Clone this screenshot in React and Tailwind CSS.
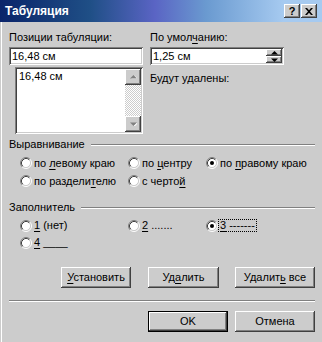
import React from 'react'

const RAISED = 'shadow-[inset_-1px_-1px_0_#404040,inset_1px_1px_0_#ffffff,inset_-2px_-2px_0_#808080]'
const SUNKEN = 'shadow-[inset_1px_1px_0_#808080,inset_-1px_-1px_0_#ffffff,inset_2px_2px_0_#404040,inset_-2px_-2px_0_#cccccc]'

function U({ children }) {
  return <span className="underline underline-offset-2 decoration-1">{children}</span>
}

function Radio({ checked }) {
  return (
    <svg width="12" height="12" viewBox="0 0 12 12" className="shrink-0">
      <circle cx="6" cy="6" r="4.5" fill="#fff" />
      <path d="M2.11 9.89A5.5 5.5 0 0 1 9.89 2.11" fill="none" stroke="#808080" />
      <path d="M9.89 2.11A5.5 5.5 0 0 1 2.11 9.89" fill="none" stroke="#ffffff" />
      <path d="M2.82 9.18A4.5 4.5 0 0 1 9.18 2.82" fill="none" stroke="#404040" />
      <path d="M9.18 2.82A4.5 4.5 0 0 1 2.82 9.18" fill="none" stroke="#cccccc" />
      {checked && <circle cx="6" cy="6" r="2" fill="#000" />}
    </svg>
  )
}

function Option({ checked, focus, children }) {
  return (
    <div className="flex items-center">
      <Radio checked={checked} />
      {focus ? (
        <span className="ml-px px-px leading-[11px] outline outline-1 outline-dotted outline-black">{children}</span>
      ) : (
        <span className="ml-[2px]">{children}</span>
      )}
    </div>
  )
}

function Arrow({ up, disabled }) {
  return (
    <svg width="7" height="4" viewBox="0 0 7 4">
      {disabled && <path d={up ? 'M1 4h7L4.5 0.5z' : 'M1 1h7L4.5 4.5z'} fill="#fff" />}
      <path d={up ? 'M0 3.5h7L3.5 0z' : 'M0 0.5h7L3.5 4z'} fill={disabled ? '#808080' : '#000'} />
    </svg>
  )
}

function Btn({ w, def, children }) {
  return (
    <div className={`${def ? 'border border-black' : ''} h-[21px] ${w}`}>
      <div className={`flex h-full items-center justify-center ${RAISED}`}>
        <span>{children}</span>
      </div>
    </div>
  )
}

function Header({ children }) {
  return (
    <div className="flex h-[13px] items-center">
      <span>{children}</span>
      <div className="ml-[6px] flex-1 border-t border-b border-t-[#808080] border-b-white" />
    </div>
  )
}

export default function App() {
  return (
    <div className="h-[342px] w-[322px] overflow-hidden bg-[#cccccc] font-['Liberation_Sans',Arial,sans-serif] text-[11px] leading-[13px] text-black shadow-[inset_1px_0_0_#cccccc,inset_2px_0_0_#ffffff]">
      {/* title bar */}
      <div className="flex h-[22px] items-center bg-[linear-gradient(90deg,#0a246a_0%,#1f4f86_28%,#5a64c4_48%,#6a9ad0_64%,#a6caf0_88%)] pl-[5px] pr-[5px]">
        <span className="flex-1 pt-px text-[12px] font-bold text-white">Табуляция</span>
        <div className={`flex h-[14px] w-[16px] items-center justify-center bg-[#cccccc] text-[11px] font-bold ${RAISED}`}>?</div>
        <div className={`ml-px flex h-[14px] w-[16px] items-center justify-center bg-[#cccccc] ${RAISED}`}>
          <svg width="8" height="7" viewBox="0 0 8 7">
            <path d="M0 0h2l2 2.3 2-2.3h2L5 3.5 8 7H6L4 4.7 2 7H0l3-3.5z" fill="#000" />
          </svg>
        </div>
      </div>

      <div className="pl-[9px] pr-[7px]">
        {/* top section */}
        <div className="flex gap-[7px] pt-[9px]">
          <div className="w-[134px]">
            <div>Позиции табуляции:</div>
            <div className={`mt-[3px] flex h-[18px] items-center bg-white pl-[3px] ${SUNKEN}`}>16,48 см</div>
            <div className={`ml-[6px] mt-[2px] flex h-[67px] bg-white p-[2px] ${SUNKEN}`}>
              <div className="flex-1 pl-[2px] pt-px">16,48 см</div>
              <div className="flex w-[16px] flex-col bg-[repeating-conic-gradient(#ffffff_0_25%,#cccccc_0_50%)] bg-[length:2px_2px]">
                <div className={`flex h-[16px] items-center justify-center bg-[#cccccc] ${RAISED}`}>
                  <Arrow up disabled />
                </div>
                <div className="flex-1" />
                <div className={`flex h-[16px] items-center justify-center bg-[#cccccc] ${RAISED}`}>
                  <Arrow disabled />
                </div>
              </div>
            </div>
          </div>
          <div className="w-[134px]">
            <div>По умол<U>ч</U>анию:</div>
            <div className={`mt-[3px] flex h-[18px] bg-white p-[2px] ${SUNKEN}`}>
              <div className="flex flex-1 items-center pl-px">1,25 см</div>
              <div className="flex w-[16px] flex-col">
                <div className={`flex flex-1 items-center justify-center bg-[#cccccc] ${RAISED}`}>
                  <Arrow up />
                </div>
                <div className={`flex flex-1 items-center justify-center bg-[#cccccc] ${RAISED}`}>
                  <Arrow />
                </div>
              </div>
            </div>
            <div className="mt-[7px]">Будут удалены:</div>
          </div>
        </div>

        {/* alignment */}
        <div className="mt-[4px]">
          <Header>Выравнивание</Header>
          <div className="mt-[3px] grid grid-cols-[108px_78px_1fr] pl-[11px] [&>*]:h-[18px]">
            <Option>по <U>л</U>евому краю</Option>
            <Option>по <U>ц</U>ентру</Option>
            <Option checked>по <U>п</U>равому краю</Option>
            <Option>по раздели<U>т</U>елю</Option>
            <Option>с черто<U>й</U></Option>
          </div>
        </div>

        {/* leader */}
        <div className="mt-[11px]">
          <Header>Заполнитель</Header>
          <div className="mt-[3px] grid grid-cols-[108px_78px_1fr] pl-[11px] [&>*]:h-[17px]">
            <Option><U>1</U> (нет)</Option>
            <Option><U>2</U> .......</Option>
            <Option checked focus><U>3</U> -------</Option>
            <Option><U>4</U> ____</Option>
          </div>
        </div>

        {/* action buttons */}
        <div className="mt-[16px] flex justify-end">
          <Btn w="w-[70px]"><U>У</U>становить</Btn>
          <div className="ml-[17px]"><Btn w="w-[71px]">Уд<U>а</U>лить</Btn></div>
          <div className="ml-[16px]"><Btn w="w-[80px]">Удалит<U>ь</U> все</Btn></div>
        </div>

        <div className="mt-[12px] border-t border-b border-t-[#808080] border-b-white" />

        <div className="mt-[9px] flex justify-end gap-[7px]">
          <Btn w="w-[80px]" def>OK</Btn>
          <Btn w="w-[80px]">Отмена</Btn>
        </div>
      </div>
    </div>
  )
}
